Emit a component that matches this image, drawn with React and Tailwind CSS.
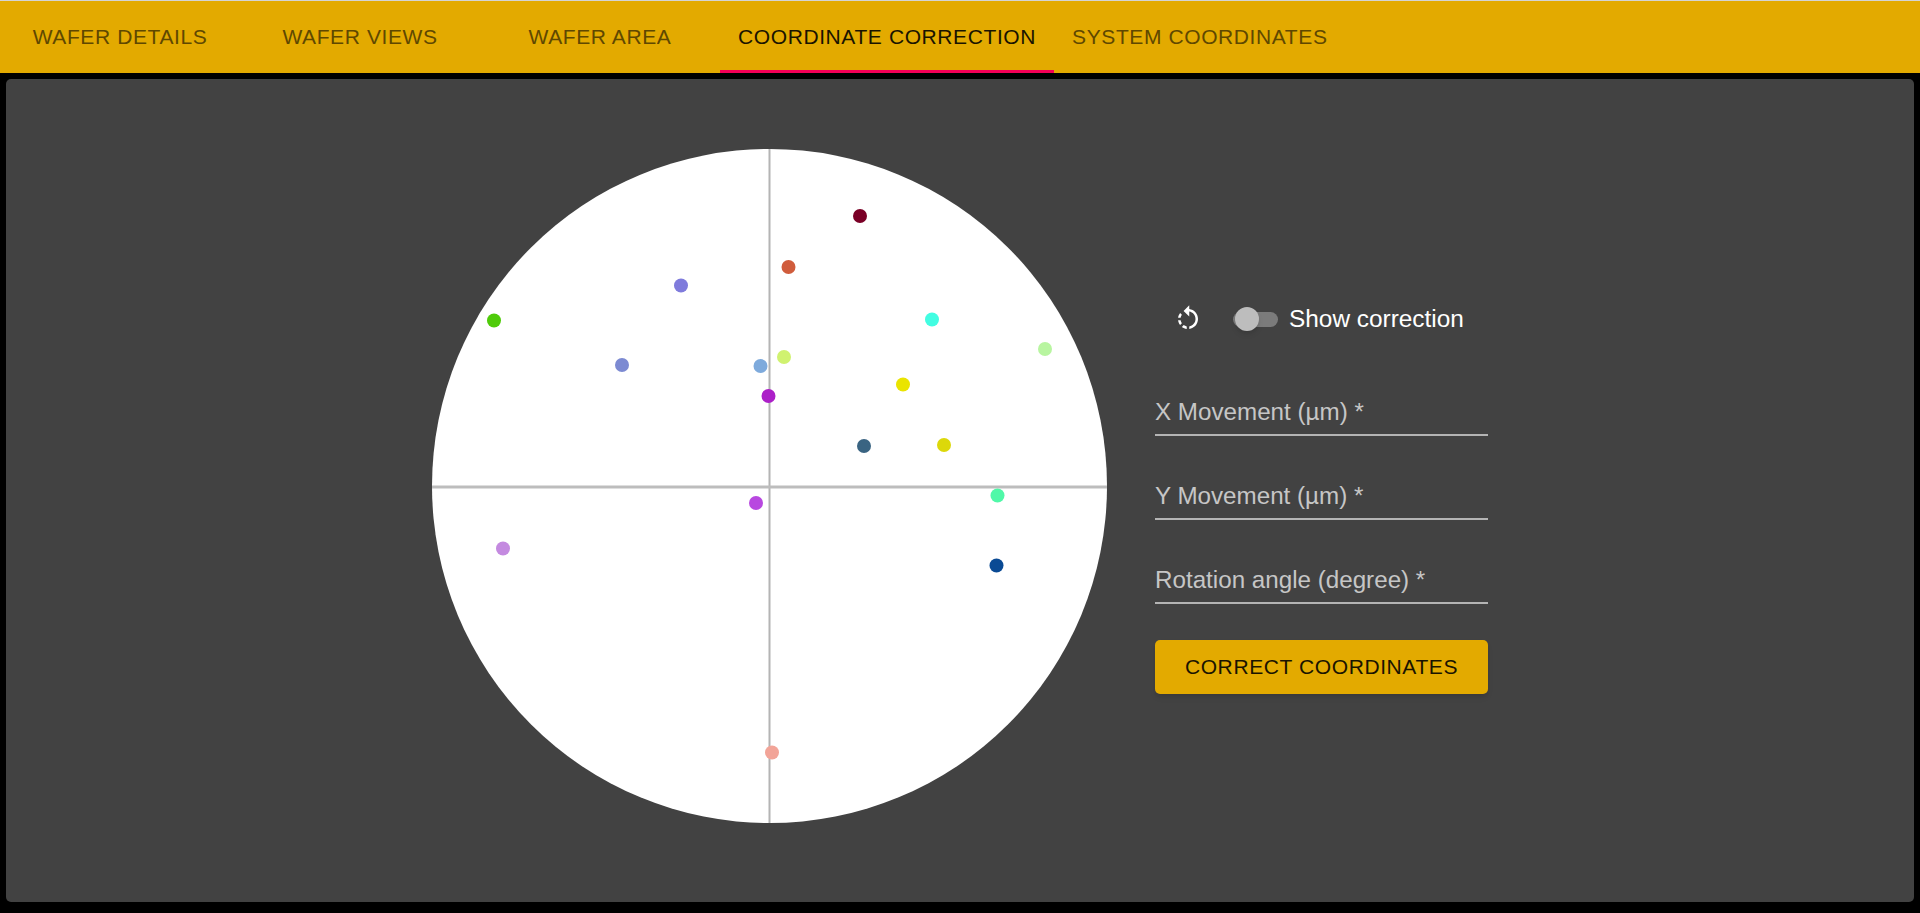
import { MdRotateLeft } from "react-icons/md";

const tabs = [
  { label: "WAFER DETAILS" },
  { label: "WAFER VIEWS" },
  { label: "WAFER AREA" },
  { label: "COORDINATE CORRECTION", active: true },
  { label: "SYSTEM COORDINATES" },
];

// x, y are relative to the wafer svg (675 x 674)
const points = [
  { x: 428, y: 67, color: "#7a0026" },
  { x: 356.5, y: 118, color: "#d05c3c" },
  { x: 249, y: 136.5, color: "#7f7bdc" },
  { x: 62, y: 171.5, color: "#4fcb0a" },
  { x: 500, y: 170.5, color: "#42fde2" },
  { x: 613, y: 200, color: "#b8f5a0" },
  { x: 352, y: 208, color: "#d0f270" },
  { x: 190, y: 216, color: "#7c8ad2" },
  { x: 328.5, y: 217, color: "#7eaadc" },
  { x: 471, y: 235.5, color: "#eae400" },
  { x: 336.5, y: 247, color: "#ac20c8" },
  { x: 432, y: 297, color: "#3a6482" },
  { x: 512, y: 296, color: "#dcd80a" },
  { x: 565.5, y: 346.5, color: "#50f8a8" },
  { x: 324, y: 354, color: "#b848e0" },
  { x: 71, y: 399.5, color: "#c48ae0" },
  { x: 564.5, y: 416.5, color: "#0a4a94" },
  { x: 340, y: 603.5, color: "#f2a498" },
];

const fields = ["X Movement (µm)", "Y Movement (µm)", "Rotation angle (degree)"];

function Wafer() {
  return (
    <svg width="675" height="674" viewBox="0 0 675 674" className="shrink-0">
      <ellipse cx="337.5" cy="337" rx="337.5" ry="337" fill="#ffffff" />
      <line x1="337.5" y1="0" x2="337.5" y2="674" stroke="#b4b4b4" strokeWidth="2" />
      <line x1="0" y1="338" x2="675" y2="338" stroke="#bdbdbd" strokeWidth="3" />
      {points.map((p) => (
        <circle key={p.color} cx={p.x} cy={p.y} r="7" fill={p.color} />
      ))}
    </svg>
  );
}

export default function App() {
  return (
    <div className="h-screen bg-black flex flex-col overflow-hidden font-['Liberation_Sans',Arial,sans-serif]">
      {/* Tabs */}
      <div className="border-t border-[#d4d4d4] bg-[#e3aa00] h-[73px] flex shrink-0">
        {tabs.map((tab) => (
          <div
            key={tab.label}
            className={`h-full min-w-[240px] px-[18px] pt-[2px] flex items-center justify-center text-[21px] tracking-[0.6px] border-b-[3px] ${
              tab.active
                ? "border-[#f50057] text-[#1a1400]"
                : "border-transparent text-[#5f4800]"
            }`}
          >
            {tab.label}
          </div>
        ))}
      </div>

      {/* Panel */}
      <div className="mt-[6px] mx-[6px] h-[823px] bg-[#424242] rounded-[5px] flex justify-center items-start gap-[48px] pt-[70px]">
        <Wafer />

        <div className="w-[333px] mt-[146px] flex flex-col">
          <div className="h-[48px] flex items-center text-white text-[24.4px]">
            <div className="w-[78px] pl-[18px] flex">
              <MdRotateLeft className="text-[30px] text-white" />
            </div>
            <div className="relative w-[45px] h-[15px] rounded-full bg-[#7b7b7b]">
              <div className="absolute left-[2px] top-[-4.5px] w-[24px] h-[24px] rounded-full bg-[#bdbdbd] shadow-md" />
            </div>
            <span className="ml-[11px]">Show correction</span>
          </div>

          <div className="mt-[9px] flex flex-col gap-[36px] pt-[36px]">
            {fields.map((label) => (
              <div
                key={label}
                className="h-[48px] flex items-end pb-[4px] border-b-2 border-[#b4b4b4] text-[24.2px] text-[#c6c6c6]"
              >
                {label} *
              </div>
            ))}
          </div>

          <button className="mt-[36px] h-[54px] rounded-[5px] bg-[#e3aa00] text-[#1a1400] text-[21px] tracking-[0.6px] shadow-md">
            CORRECT COORDINATES
          </button>
        </div>
      </div>
    </div>
  );
}
